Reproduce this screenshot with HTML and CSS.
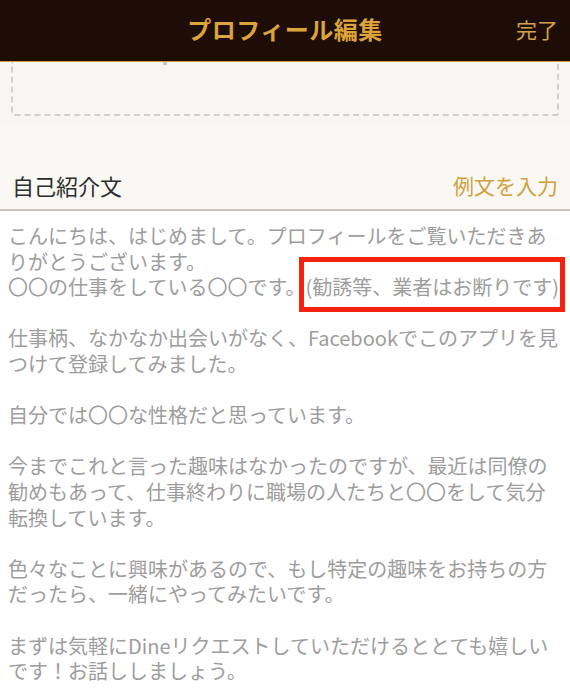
FILE: index.html
```html
<!DOCTYPE html>
<html lang="ja">
<head>
    <meta charset="UTF-8">
    <meta name="viewport" content="width=device-width, initial-scale=1.0">
    <title>プロフィール編集</title>
    <link rel="stylesheet" href="styles.css">
</head>
<body>
    <header class="nav">
        <div class="nav-title">プロフィール編集</div>
        <div class="nav-done">完了</div>
    </header>

    <div class="photos">
        <div class="photo-box">
            <span class="photo-mark"></span>
        </div>
    </div>

    <div class="section-head">
        <div class="section-title">自己紹介文</div>
        <div class="section-link">例文を入力</div>
    </div>

    <div class="intro">
        <p>こんにちは、はじめまして。プロフィールをご覧いただきあ<br>りがとうございます。<br>〇〇の仕事をしている〇〇です。<span class="mark">(勧誘等、業者はお断りです)</span></p>
        <p>仕事柄、なかなか出会いがなく、Facebookでこのアプリを見<br>つけて登録してみました。</p>
        <p>自分では〇〇な性格だと思っています。</p>
        <p>今までこれと言った趣味はなかったのですが、最近は同僚の<br>勧めもあって、仕事終わりに職場の人たちと〇〇をして気分<br>転換しています。</p>
        <p>色々なことに興味があるので、もし特定の趣味をお持ちの方<br>だったら、一緒にやってみたいです。</p>
        <p>まずは気軽にDineリクエストしていただけるととても嬉しい<br>です！お話ししましょう。</p>
    </div>
</body>
</html>
```

FILE: styles.css
```css
body {
    margin: 0;
    padding: 0;
    font-family: "Noto Sans CJK JP", "Noto Sans", sans-serif;
    background-color: #ffffff;
    overflow: hidden;
}

.nav {
    height: 62px;
    background-color: #1e0d07;
    border-bottom: 1px solid #d59c34;
    display: flex;
    align-items: center;
    justify-content: center;
    position: relative;
    box-sizing: border-box;
    padding-bottom: 5px;
}

.nav-title {
    color: #dca33a;
    font-size: 24px;
    font-weight: bold;
    letter-spacing: 0.5px;
}

.nav-done {
    position: absolute;
    right: 12px;
    top: 14px;
    color: #d1a347;
    font-size: 21px;
}

.photos {
    background-color: #f7f6f2;
    padding: 0 11px 8px;
}

.photo-box {
    height: 52px;
    border: 2px dashed #d3d0ca;
    border-top: none;
    border-radius: 0 0 3px 3px;
}

.photo-mark {
    display: block;
    width: 4px;
    height: 3px;
    margin-left: 150px;
    background-color: #c8c6c2;
}

.section-head {
    height: 87px;
    background-color: #f9f8f5;
    border-bottom: 2px solid #c9c5be;
    display: flex;
    align-items: flex-end;
    justify-content: space-between;
    padding: 0 12px 10px 12px;
    box-sizing: border-box;
}

.section-title {
    color: #2e2e2e;
    font-size: 22px;
    line-height: 28px;
}

.section-link {
    color: #d1a13c;
    font-size: 21px;
    line-height: 28px;
}

.intro {
    padding: 12px 8px 0;
    color: #9d9d9d;
    font-size: 20px;
    line-height: 25.6px;
    white-space: nowrap;
}

.intro p {
    margin: 0 0 25.6px;
}

.mark {
    position: relative;
}

.mark::after {
    content: "";
    position: absolute;
    top: -15px;
    bottom: -11px;
    left: -6px;
    right: -6px;
    border: 5px solid #f4220f;
}
```
